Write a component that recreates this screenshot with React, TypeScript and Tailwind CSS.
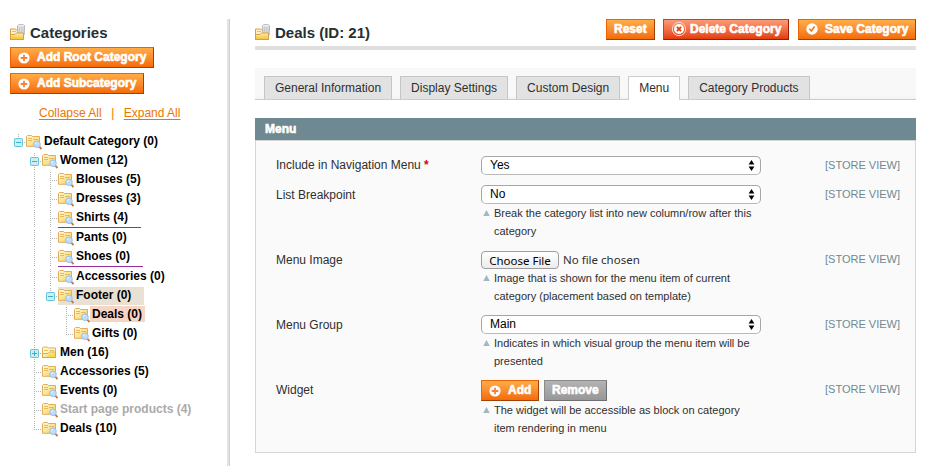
import type { ReactNode } from "react";

type Cell = "blank" | "line" | "tee" | "end" | "minus" | "minusEnd" | "plus" | "root";

type Row = {
  label: string;
  cells: Cell[];
  box?: string;
  tag?: string;
  folder?: boolean;
};

const PLAIN = "h-[18px]";
const RULE_A = "h-[19px] w-[83px] border-b border-b-[#9a2a9e]";
const RULE_B = "h-[19px] w-[85px] border-b border-b-[#9a2a9e]";

const rows: Row[] = [
  { label: "Default Category (0)", cells: ["root"] },
  { label: "Women (12)", cells: ["blank", "minus"] },
  { label: "Blouses (5)", cells: ["blank", "line", "tee"] },
  { label: "Dresses (3)", cells: ["blank", "line", "tee"] },
  { label: "Shirts (4)", cells: ["blank", "line", "tee"], box: RULE_A },
  { label: "Pants (0)", cells: ["blank", "line", "tee"] },
  { label: "Shoes (0)", cells: ["blank", "line", "tee"], box: RULE_B },
  { label: "Accessories (0)", cells: ["blank", "line", "tee"] },
  { label: "Footer (0)", cells: ["blank", "line", "minusEnd"], box: "h-[18px] w-[86px] bg-[#e9e1d4]" },
  { label: "Deals (0)", cells: ["blank", "line", "blank", "tee"], tag: "bg-[#f6d5c5] pr-[3px] text-black" },
  { label: "Gifts (0)", cells: ["blank", "line", "blank", "end"] },
  { label: "Men (16)", cells: ["blank", "plus"], folder: true },
  { label: "Accessories (5)", cells: ["blank", "tee"] },
  { label: "Events (0)", cells: ["blank", "tee"] },
  { label: "Start page products (4)", cells: ["blank", "tee"], tag: "text-[#aaaaaa]" },
  { label: "Deals (10)", cells: ["blank", "end"] },
];

function TreeCell({ kind }: { kind: Cell }) {
  const toggle = kind === "minus" || kind === "minusEnd" || kind === "plus" || kind === "root";
  const bottom = kind === "line" || kind === "tee" || kind === "minus" || kind === "plus" ? 19 : 10;
  return (
    <svg width="16" height="19" className="block shrink-0" shapeRendering="crispEdges">
      {kind !== "blank" && (
        <path d={`M8.5 1V${bottom}`} stroke="#b4b4b4" strokeDasharray="1 1" fill="none" />
      )}
      {kind !== "blank" && kind !== "line" && (
        <path d="M10 9.5H16" stroke="#b4b4b4" strokeDasharray="1 1" fill="none" />
      )}
      {toggle && (
        <g>
          <rect x="4.5" y="5.5" width="8" height="8" rx=".8" fill="#c9eff5" stroke="#62c4d8" shapeRendering="auto" />
          <path d="M6 9.5H11" stroke="#3fb0c8" />
          {kind === "plus" && <path d="M8.5 7V12" stroke="#3fb0c8" />}
        </g>
      )}
    </svg>
  );
}

function TreeFolder({ plain }: { plain?: boolean }) {
  return (
    <svg width="16" height="18" viewBox="0 0 16 18" className="block shrink-0">
      <defs>
        <linearGradient id="leaf" x1="0" y1="0" x2="1" y2="1">
          <stop offset="0" stopColor="#fffad6" />
          <stop offset="0.5" stopColor="#fbe698" />
          <stop offset="1" stopColor="#f2c83c" />
        </linearGradient>
      </defs>
      {plain ? (
        <g>
          <path d="M.5 13.5V4L1.5 3H5.5L6.5 4H13.5V13.5Z" fill="#fff4c8" stroke="#e3ac5a" />
          <path d="M2 6.5H6M7.5 6.5H12" stroke="#e9bd63" />
          <path d="M.5 13.5V9.5H6L7.5 8H13.5V13.5Z" fill="url(#leaf)" stroke="#dba146" strokeWidth=".9" />
          <path d="M7 10H13V13H5Z" fill="#f8dc45" opacity=".85" />
        </g>
      ) : (
        <g>
          <path d="M.5 13.3V3.5L1.5 2.5H5.5L6.5 3.5H13.5V13.3Z" fill="url(#leaf)" stroke="#e3ac5a" />
          <path d="M2 5.5H6M7 6.5H12M2 7.5H6" stroke="#e8b95a" />
          <path d="M13.3 13.7L15.5 16" stroke="#c07a4c" strokeWidth="1.9" />
          <circle cx="11" cy="11.3" r="3.3" fill="#bfdcfa" stroke="#9dbfe8" />
          <path d="M9.2 11A2 2 0 0 1 11 9.4" stroke="#f1f8ff" fill="none" />
        </g>
      )}
    </svg>
  );
}

function HeadFolder() {
  return (
    <svg width="16" height="17" viewBox="0 0 16 17" className="block shrink-0">
      <defs>
        <linearGradient id="front" x1="0" y1="0" x2="0" y2="1">
          <stop offset="0" stopColor="#fff0ac" />
          <stop offset="1" stopColor="#f4bf30" />
        </linearGradient>
      </defs>
      <path d="M.5 15.5V5H5.5L6.5 6H13.5V15.5Z" fill="#fff0c4" stroke="#dd9b45" />
      <path d="M7.5 1.8Q7.5.5 11 .5T14.6 1.8L14.2 11H7.8Z" fill="#e4e4e6" stroke="#a9a9ad" strokeWidth=".8" />
      <path d="M9.4 2.5V9M11.2 2.5V9M12.9 2.5V9" stroke="#b9b9bd" strokeWidth=".7" />
      <path d="M8 1.8H14" stroke="#fafafa" strokeWidth=".8" />
      <path d="M2 7.5H6" stroke="#e9bd63" />
      <path d="M.5 15.5V10.5H5L6.5 9H13.5V15.5Z" fill="url(#front)" stroke="#dd9a3a" strokeWidth=".9" />
    </svg>
  );
}

function AddIcon() {
  return (
    <svg width="12" height="12" viewBox="0 0 12 12" className="mt-px block shrink-0">
      <circle cx="6" cy="6" r="5.6" fill="#fff" />
      <path d="M6 2.7V9.3M2.7 6H9.3" stroke="#f4823a" strokeWidth="1.8" />
    </svg>
  );
}

function DeleteIcon() {
  return (
    <svg width="16" height="16" viewBox="0 0 16 16" className="block shrink-0">
      <circle cx="8" cy="8" r="6.7" fill="none" stroke="#ffd9cc" strokeWidth="1" />
      <circle cx="8" cy="8" r="5" fill="#fff" />
      <path d="M5.9 5.9L10.1 10.1M10.1 5.9L5.9 10.1" stroke="#dd4513" strokeWidth="2" />
    </svg>
  );
}

function SaveIcon() {
  return (
    <svg width="12" height="12" viewBox="0 0 12 12" className="block shrink-0">
      <circle cx="6" cy="6" r="5.7" fill="#fff" />
      <path d="M3.4 5.8L5.4 8L8.6 3.6" stroke="#f07a20" strokeWidth="1.7" fill="none" />
    </svg>
  );
}

const TONES = {
  orange: "border-t-[#ed6502] border-l-[#ed6502] border-r-[#a04300] border-b-[#a04300] from-[#ffac47] to-[#f46b04]",
  red: "border-t-[#d24403] border-l-[#d24403] border-r-[#9c1d00] border-b-[#9c1d00] from-[#fb9b74] to-[#e33a04]",
  gray: "border-t-[#8a8a8a] border-l-[#8a8a8a] border-r-[#6f6f6f] border-b-[#6f6f6f] from-[#b4b4b4] to-[#979797]",
};

function Button({ tone = "orange", size, children }: { tone?: keyof typeof TONES; size: string; children: ReactNode }) {
  return (
    <button
      className={`flex h-[21px] shrink-0 items-center whitespace-nowrap border bg-linear-to-b pb-px pl-[7px] text-[12px] leading-[18px] font-bold text-white [-webkit-text-stroke:0.6px_white] ${TONES[tone]} ${size}`}
    >
      {children}
    </button>
  );
}

function Select({ value }: { value: string }) {
  return (
    <div className="flex h-[19px] w-[280px] items-center justify-between rounded-[5px] border border-[#a6a6a6] border-b-[#b9b9b9] bg-white pr-[5px] pl-2 text-[12px] leading-4 text-black">
      <span className="pb-px">{value}</span>
      <svg width="7" height="11" viewBox="0 0 7 11" className="block">
        <path d="M3.5 0L6.4 4.6H.6ZM3.5 11L6.4 6.4H.6Z" fill="#000" />
      </svg>
    </div>
  );
}

function Note({ lines }: { lines: string[] }) {
  return (
    <div className="flex pl-[2px] text-[11px] leading-[18px] text-[#2f2f2f]">
      <svg width="7" height="6" viewBox="0 0 7 6" className="mt-[6px] mr-1 block shrink-0">
        <path d="M3.5 0L6.8 6H.2Z" fill="#a5b7be" />
      </svg>
      <div className="whitespace-nowrap">
        {lines.map((l) => (
          <div key={l}>{l}</div>
        ))}
      </div>
    </div>
  );
}

function Field({ label, required, height, children }: { label: string; required?: boolean; height: string; children: ReactNode }) {
  return (
    <div className={`flex ${height}`}>
      <div className={`w-[205px] shrink-0 text-[12px] leading-4 text-[#2f2f2f] ${required ? "pt-px" : "pt-[2px]"}`}>
        {label}
        {required && <span className="font-bold text-[#d40707]"> *</span>}
      </div>
      <div className="w-[280px] shrink-0">{children}</div>
      <div className="ml-auto pt-px pr-[15px] text-[11px] leading-4 text-[#6f8992]">[STORE VIEW]</div>
    </div>
  );
}

const tabs = ["General Information", "Display Settings", "Custom Design", "Menu", "Category Products"];

export default function App() {
  return (
    <div className="flex h-[466px] w-[932px] overflow-hidden bg-white font-['Liberation_Sans',Arial,sans-serif] text-[#2f2f2f]">
      <aside className="w-[227px] shrink-0 pt-6 pl-[10px]">
        <div className="flex h-[23px]">
          <HeadFolder />
          <h3 className="ml-1 text-[15px] leading-[18px] font-bold text-[#253033]">Categories</h3>
        </div>
        <div className="flex flex-col gap-[5px]">
          <Button size="w-[144px]"><AddIcon /><span className="ml-[7px]">Add Root Category</span></Button>
          <Button size="w-[134px]"><AddIcon /><span className="ml-[7px]">Add Subcategory</span></Button>
        </div>
        <div className="mt-[11px] flex h-4 pl-[29px] text-[12px] leading-4 text-[#ea7601]">
          <a className="underline underline-offset-2">Collapse All</a>
          <span className="w-[22px] text-center">|</span>
          <a className="underline underline-offset-2">Expand All</a>
        </div>
        <div className="mt-[12px]">
          {rows.map((r) => (
            <div key={r.label} className="mb-px flex">
              <div className="-mb-px flex">
                {r.cells.map((c, i) => (
                  <TreeCell key={i} kind={c} />
                ))}
              </div>
              <div className={`flex items-start ${r.box ?? PLAIN}`}>
                <TreeFolder plain={r.folder} />
                <span className={`h-4 whitespace-nowrap pl-[2px] text-[12px] leading-4 font-bold ${r.tag ?? "text-black"}`}>
                  {r.label}
                </span>
              </div>
            </div>
          ))}
        </div>
      </aside>

      <div className="mt-[19px] w-[3px] shrink-0 border-r border-[#cfcfcf] bg-[#e4e4e4]" />

      <main className="ml-[25px] w-[661px] shrink-0 pt-[19px]">
        <div className="flex h-[31px] border-b-4 border-[#dfdfdf]">
          <div className="flex pt-[5px]">
            <HeadFolder />
            <h3 className="ml-1 text-[15px] leading-[18px] font-bold text-[#253033]">Deals (ID: 21)</h3>
          </div>
          <div className="ml-auto flex">
            <Button size="w-[49px]">Reset</Button>
            <Button size="ml-2 w-[126px]" tone="red"><DeleteIcon /><span className="ml-[3px]">Delete Category</span></Button>
            <Button size="ml-[9px] w-[118px]"><SaveIcon /><span className="ml-[7px]">Save Category</span></Button>
          </div>
        </div>

        <div className="mt-[18px] flex h-8 gap-2 border-b border-[#c9cdcf] bg-linear-to-b from-[#f8f8f8] from-90% to-[#f2f2f2] pt-2 pl-[9px]">
          {tabs.map((t) => (
            <div
              key={t}
              className={`border border-b-0 px-[10px] text-[12px] leading-[22px] whitespace-nowrap ${
                t === "Menu" ? "h-6 border-[#c9cdcf] bg-white" : "h-[23px] border-[#c6c6c6] bg-[#e2e2e2]"
              }`}
            >
              {t}
            </div>
          ))}
        </div>

        <div className="mt-[18px] h-[22px] bg-[#6f8992] pl-[10px] text-[12px] leading-[22px] font-bold text-white [-webkit-text-stroke:0.6px_white]">
          Menu
        </div>
        <div className="h-[313px] border border-[#d6d6d6] bg-[#fafafa] pt-[15px] pl-5">
          <Field label="Include in Navigation Menu" required height="h-[29px]">
            <Select value="Yes" />
          </Field>
          <Field label="List Breakpoint" height="h-[65px]">
            <Select value="No" />
            <Note lines={["Break the category list into new column/row after this", "category"]} />
          </Field>
          <Field label="Menu Image" height="h-[65px]">
            <div className="flex h-[19px] items-end font-['Noto_Sans',sans-serif] text-[11.5px]">
              <button className="h-[18px] w-[78px] rounded-[4px] border border-[#9d9d9d] bg-linear-to-b from-white to-[#ececec] leading-[17px] whitespace-nowrap text-black">
                Choose File
              </button>
              <span className="ml-1 leading-[18px] whitespace-nowrap">No file chosen</span>
            </div>
            <Note lines={["Image that is shown for the menu item of current", "category (placement based on template)"]} />
          </Field>
          <Field label="Menu Group" height="h-[65px]">
            <Select value="Main" />
            <Note lines={["Indicates in which visual group the menu item will be", "presented"]} />
          </Field>
          <Field label="Widget" height="h-[65px]">
            <div className="flex gap-[5px]">
              <Button size="w-[58px]"><AddIcon /><span className="ml-[7px]">Add</span></Button>
              <Button size="w-[63px]" tone="gray">Remove</Button>
            </div>
            <Note lines={["The widget will be accessible as block on category", "item rendering in menu"]} />
          </Field>
        </div>
      </main>
    </div>
  );
}
